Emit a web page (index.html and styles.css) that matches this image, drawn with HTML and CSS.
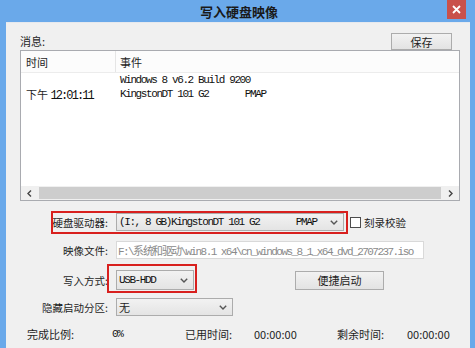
FILE: index.html
```html
<!doctype html>
<html lang="zh-CN">
    <head>
        <meta charset="UTF-8" />
        <title>写入硬盘映像</title>
        <link rel="stylesheet" href="styles.css">
    </head>
    <body>
        <div class="window">
            <div class="titlebar">
                <span class="title">写入硬盘映像</span>
                <span class="close">
                    <svg width="9" height="9" viewBox="0 0 9 9">
                        <path d="M1 1 L8 8 M8 1 L1 8" stroke="#fff" stroke-width="1.8" />
                    </svg>
                </span>
            </div>

            <div class="client">
                <div class="top-row">
                    <span class="label-text">消息:</span>
                    <div class="btn save-btn">保存</div>
                </div>

                <div class="list">
                    <div class="list-head">
                        <div class="col-time">时间</div>
                        <div class="col-event">事件</div>
                    </div>
                    <div class="list-body">
                        <div class="list-row">
                            <div class="col-time"></div>
                            <div class="col-event mono">Windows 8 v6.2 Build 9200</div>
                        </div>
                        <div class="list-row">
                            <div class="col-time">下午 <span class="mono">12:01:11</span></div>
                            <div class="col-event mono">KingstonDT 101 G2       PMAP</div>
                        </div>
                    </div>
                    <div class="hscroll">
                        <span class="arrow">
                            <svg width="5" height="7" viewBox="0 0 5 7"><path d="M4 0.5 L1 3.5 L4 6.5" fill="none" stroke="#444" stroke-width="1.4" /></svg>
                        </span>
                        <span class="thumb"></span>
                        <span class="arrow">
                            <svg width="5" height="7" viewBox="0 0 5 7"><path d="M1 0.5 L4 3.5 L1 6.5" fill="none" stroke="#444" stroke-width="1.4" /></svg>
                        </span>
                    </div>
                </div>

                <div class="form">
                    <div class="field row-drive">
                        <span class="label">硬盘驱动器:</span>
                        <div class="combo drive-combo">
                            <span class="mono">(I:, 8 GB)KingstonDT 101 G2       PMAP</span>
                            <svg class="chevron" width="8" height="5" viewBox="0 0 8 5"><path d="M0.8 0.8 L4 4 L7.2 0.8" fill="none" stroke="#555" stroke-width="1.4" /></svg>
                        </div>
                        <span class="checkbox"></span>
                        <span class="check-label">刻录校验</span>
                    </div>

                    <div class="field row-image">
                        <span class="label">映像文件:</span>
                        <div class="text-input mono">F:\系统和驱动\win8.1 x64\cn_windows_8_1_x64_dvd_2707237.iso</div>
                    </div>

                    <div class="field row-mode">
                        <span class="label">写入方式:</span>
                        <div class="combo mode-combo">
                            <span class="mono">USB-HDD</span>
                            <svg class="chevron" width="8" height="5" viewBox="0 0 8 5"><path d="M0.8 0.8 L4 4 L7.2 0.8" fill="none" stroke="#555" stroke-width="1.4" /></svg>
                        </div>
                        <div class="btn boot-btn">便捷启动</div>
                    </div>

                    <div class="field row-hidden">
                        <span class="label">隐藏启动分区:</span>
                        <div class="combo hidden-combo">
                            <span>无</span>
                            <svg class="chevron" width="8" height="5" viewBox="0 0 8 5"><path d="M0.8 0.8 L4 4 L7.2 0.8" fill="none" stroke="#555" stroke-width="1.4" /></svg>
                        </div>
                    </div>

                    <div class="stats">
                        <span>完成比例:</span>
                        <span class="mono">0%</span>
                        <span>已用时间:</span>
                        <span>00:00:00</span>
                        <span>剩余时间:</span>
                        <span>00:00:00</span>
                    </div>
                </div>

                <!-- red highlight marks drawn over the form -->
                <div class="mark mark-drive"></div>
                <div class="mark mark-mode"></div>
            </div>
        </div>
    </body>
</html>
```

FILE: styles.css
```css
body {
    margin: 0;
    font-family: "Noto Sans CJK SC", "Noto Sans", sans-serif;
    font-size: 11px;
    color: #1e1e1e;
}
.window {
    width: 475px;
    height: 348px;
    box-sizing: border-box;
    padding: 0 5px 0 6px;
    background-color: #6aa9ea;
    display: flex;
    flex-direction: column;
}
.titlebar {
    height: 22px;
    flex: none;
    position: relative;
    display: flex;
    justify-content: center;
    align-items: center;
}
.title {
    font-size: 13px;
    font-weight: bold;
    color: #1a1a1a;
    margin-left: 2px;
}
.close {
    position: absolute;
    top: 0;
    right: 4px;
    width: 19px;
    height: 19px;
    background-color: #c9514b;
    display: flex;
    justify-content: center;
    align-items: center;
}
.client {
    flex: 1;
    position: relative;
    background-color: #f0f0f0;
    border-top: 1px solid #e6e9ee;
    box-sizing: border-box;
}
.mono {
    font-family: "Liberation Mono", monospace;
    font-size: 11px;
    letter-spacing: -1.4px;
    white-space: pre;
    color: #111;
}
.top-row {
    margin-top: 8px;
    height: 19px;
    padding: 0 18px 0 14px;
    display: flex;
    justify-content: space-between;
    align-items: center;
}
.label-text {
    margin-top: 1px;
}
.btn {
    box-sizing: border-box;
    border: 1px solid #acacac;
    background: linear-gradient(#f2f2f2, #e3e3e3);
    display: flex;
    justify-content: center;
    align-items: center;
    font-size: 11px;
    color: #1e1e1e;
}
.save-btn {
    width: 61px;
    height: 17px;
    margin-top: 2px;
}
.list {
    margin-left: 14px;
    width: 440px;
    height: 151px;
    box-sizing: border-box;
    border: 1px solid #a9abb0;
    background-color: #fff;
    display: flex;
    flex-direction: column;
}
.list-head {
    height: 21px;
    flex: none;
    display: flex;
    align-items: stretch;
    border-bottom: 1px solid #ececec;
    background-color: #fcfcfc;
}
.list-head .col-time {
    border-right: 1px solid #e5e5e5;
}
.list-head > div {
    display: flex;
    align-items: center;
}
.col-time {
    width: 95px;
    box-sizing: border-box;
    padding-left: 5px;
    flex: none;
}
.col-event {
    padding-left: 4px;
}
.list-body {
    flex: 1;
}
.list-row {
    height: 14px;
    display: flex;
    align-items: center;
}
.list-row .col-time .mono {
    font-size: 12px;
    letter-spacing: -1.9px;
}
.hscroll {
    height: 14px;
    flex: none;
    display: flex;
    align-items: stretch;
    background-color: #f0f0f0;
}
.arrow {
    width: 17px;
    display: flex;
    justify-content: center;
    align-items: center;
}
.thumb {
    flex: 1;
    margin: 1px 1px;
    background-color: #cdcdcd;
}
.form {
    padding-top: 11px;
}
.field {
    height: 20px;
    display: flex;
    align-items: center;
}
.label {
    width: 102px;
    text-align: right;
    flex: none;
    margin-right: 8px;
    font-size: 10.5px;
}
.combo {
    box-sizing: border-box;
    height: 19px;
    border: 1px solid #acacac;
    background: linear-gradient(#f2f2f2, #e4e4e4);
    display: flex;
    align-items: center;
    justify-content: space-between;
    padding: 0 5px 0 2px;
}
.chevron {
    flex: none;
}
.drive-combo {
    width: 228px;
    height: 18px;
}
.checkbox {
    width: 11px;
    height: 11px;
    box-sizing: border-box;
    border: 1px solid #4d4d4d;
    background-color: #fff;
    margin-left: 6px;
}
.check-label {
    margin-left: 3px;
    font-size: 10.5px;
}
.row-image {
    margin-top: 8px;
}
.text-input {
    box-sizing: border-box;
    width: 308px;
    height: 18px;
    border: 1px solid #d9d9d9;
    background-color: #fff;
    color: #8a8a8a;
    padding-left: 1px;
    display: flex;
    align-items: center;
    overflow: hidden;
    letter-spacing: -1.55px;
}
.row-mode {
    margin-top: 10px;
}
.mode-combo {
    width: 78px;
    height: 20px;
}
.boot-btn {
    width: 89px;
    height: 19px;
    margin-left: 101px;
}
.row-hidden {
    margin-top: 7px;
}
.hidden-combo {
    width: 117px;
    height: 18px;
}
.stats {
    margin-top: 8px;
    height: 18px;
    padding-left: 21px;
    display: grid;
    grid-template-columns: 85px 73px 69px 83px 70px auto;
    align-items: center;
}
.mark {
    position: absolute;
    border: 2.5px solid #d8201e;
    box-sizing: border-box;
}
.mark-drive {
    left: 45px;
    top: 188px;
    width: 297px;
    height: 23px;
}
.mark-mode {
    left: 101px;
    top: 241px;
    width: 90px;
    height: 29px;
}
```
